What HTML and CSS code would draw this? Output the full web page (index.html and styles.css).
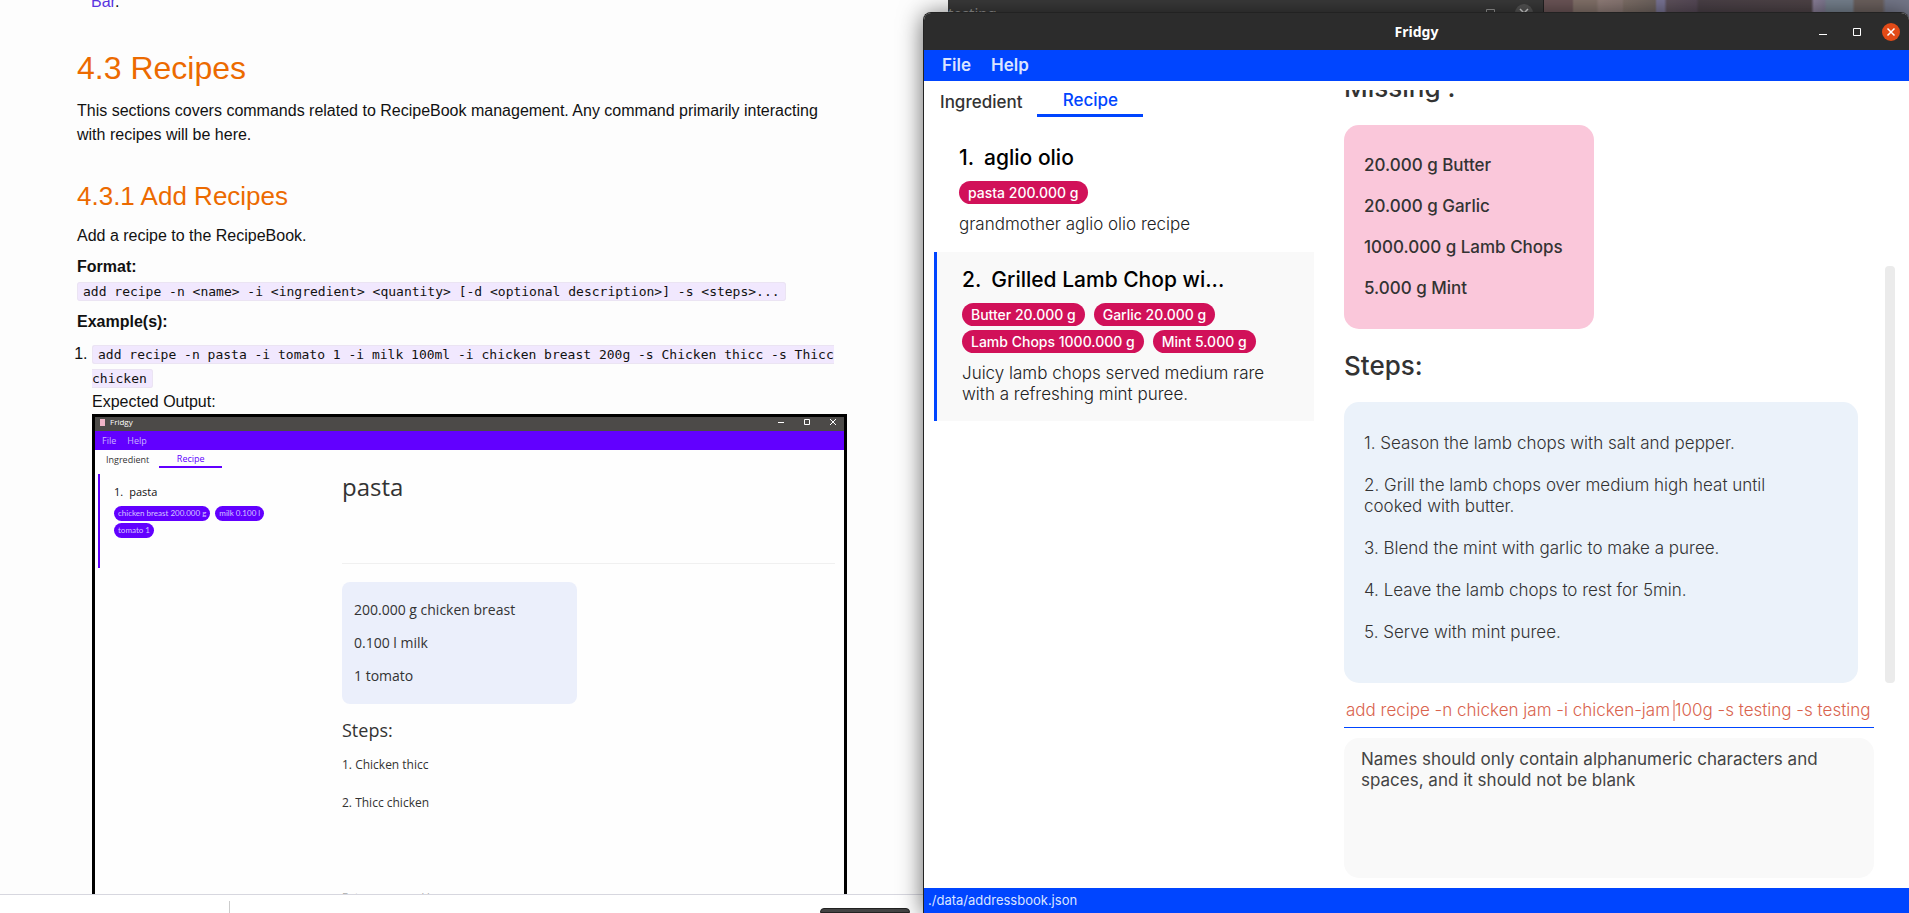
FILE: index.html
```html
<!DOCTYPE html>
<html lang="en">
<head>
<meta charset="utf-8">
<title>Fridgy</title>
<link rel="stylesheet" href="styles.css">
</head>
<body>
<div class="desktop">
  <div class="wallpaper"></div>

  <section class="browser" aria-label="User guide">
    <article class="guide">
      <p class="guide-prev"><a href="#bar">Bar</a>.</p>
      <h2>4.3 Recipes</h2>
      <p>This sections covers commands related to RecipeBook management. Any command primarily interacting with recipes will be here.</p>
      <h3>4.3.1 Add Recipes</h3>
      <p>Add a recipe to the RecipeBook.</p>
      <p><strong>Format:</strong><br><code>add recipe -n &lt;name&gt; -i &lt;ingredient&gt; &lt;quantity&gt; [-d &lt;optional description&gt;] -s &lt;steps&gt;...</code></p>
      <p><strong>Example(s):</strong></p>
      <ol>
        <li><code>add recipe -n pasta -i tomato 1 -i milk 100ml -i chicken breast 200g -s Chicken thicc -s Thicc chicken</code><br>Expected Output:
          <figure class="shot">
            <div class="shot-title">
              <span class="shot-icon"></span><span>Fridgy</span>
              <svg class="shot-controls" viewBox="0 0 60 10" width="60" height="10" fill="none" stroke="#fff"><path d="M1 5.5h6M27.500 2.500h5v5h-5zM53 2l6 6M59 2l-6 6"/></svg>
            </div>
            <div class="shot-menu"><span>File</span><span>Help</span></div>
            <div class="shot-main">
              <div class="shot-left">
                <div class="shot-tabs"><span>Ingredient</span><span class="on">Recipe</span></div>
                <div class="shot-card">
                  <div class="shot-name"><span>1.</span><span>pasta</span></div>
                  <div class="shot-chips"><span>chicken breast 200.000 g</span><span>milk 0.100 l</span><span>tomato 1</span></div>
                </div>
              </div>
              <div class="shot-right">
                <div class="shot-heading">pasta</div>
                <div class="shot-box"><span>200.000 g chicken breast</span><span>0.100 l milk</span><span>1 tomato</span></div>
                <div class="shot-steps">Steps:</div>
                <div class="shot-step">1. Chicken thicc</div>
                <div class="shot-step">2. Thicc chicken</div>
                <div class="shot-input">Enter command here...</div>
              </div>
            </div>
          </figure>
        </li>
      </ol>
    </article>
    <div class="downloads"><span class="tick"></span><span class="showall"></span></div>
  </section>

  <section class="terminal" aria-label="testing">
    <span class="terminal-title">testing</span>
    <svg class="terminal-controls" viewBox="0 0 50 20" width="50" height="20" fill="none"><circle cx="40" cy="10" r="9" fill="#555"/><path d="M2.500 6.500h8v8h-8z" stroke="#999"/><path d="M36 6l8 8M44 6l-8 8" stroke="#ddd" stroke-width="1.500"/></svg>
  </section>

  <main class="window">
    <header class="titlebar">
      <span></span>
      <h1>Fridgy</h1>
      <div class="controls">
        <button aria-label="Minimize"><svg viewBox="0 0 18 18" width="18" height="18"><path d="M5 11.500h8" stroke="#fff"/></svg></button>
        <button aria-label="Maximize"><svg viewBox="0 0 18 18" width="18" height="18"><path d="M5.500 5.500h7v7h-7z" stroke="#fff" fill="none"/></svg></button>
        <button aria-label="Close"><svg viewBox="0 0 18 18" width="18" height="18"><circle cx="9" cy="9" r="9" fill="#e24a17"/><path d="M5.500 5.500l7 7M12.500 5.500l-7 7" stroke="#fff" stroke-width="1.500"/></svg></button>
      </div>
    </header>
    <nav class="menubar"><button>File</button><button>Help</button></nav>
    <div class="content">
      <section class="recipes">
        <div class="tabs" role="tablist">
          <button role="tab" aria-selected="false">Ingredient</button>
          <button role="tab" aria-selected="true">Recipe</button>
        </div>
        <article class="recipe">
          <h2><span>1.</span><span class="name">aglio olio</span></h2>
          <ul class="chips"><li>pasta 200.000 g</li></ul>
          <p>grandmother aglio olio recipe</p>
        </article>
        <article class="recipe selected">
          <h2><span>2.</span><span class="name">Grilled Lamb Chop wi...</span></h2>
          <ul class="chips"><li>Butter 20.000 g</li><li>Garlic 20.000 g</li><li>Lamb Chops 1000.000 g</li><li>Mint 5.000 g</li></ul>
          <p>Juicy lamb chops served medium rare with a refreshing mint puree.</p>
        </article>
      </section>
      <section class="detail">
        <div class="scroller">
          <div class="scroll-body">
            <h2>Missing :</h2>
            <ul class="missing"><li>20.000 g Butter</li><li>20.000 g Garlic</li><li>1000.000 g Lamb Chops</li><li>5.000 g Mint</li></ul>
            <h2>Steps:</h2>
            <div class="steps">
              <p>1. Season the lamb chops with salt and pepper.</p>
              <p>2. Grill the lamb chops over medium high heat until cooked with butter.</p>
              <p>3. Blend the mint with garlic to make a puree.</p>
              <p>4. Leave the lamb chops to rest for 5min.</p>
              <p>5. Serve with mint puree.</p>
            </div>
          </div>
          <div class="thumb"></div>
        </div>
        <div class="command">
          <input type="text" aria-label="Command" value="add recipe -n chicken jam -i chicken-jam 100g -s testing -s testing">
          <span class="caret"></span>
        </div>
        <div class="result">Names should only contain alphanumeric characters and spaces, and it should not be blank</div>
      </section>
    </div>
    <footer class="status">./data/addressbook.json</footer>
  </main>
</div>
</body>
</html>
```

FILE: styles.css
```css
* { box-sizing: border-box; }

body { margin: 0; font-family: "Liberation Sans", Arial, sans-serif; font-size: 16px; }
h1, h2, h3, p, ul, ol, figure { margin: 0; padding: 0; font-weight: 400; }
ul { list-style: none; }
button { border: 0; padding: 0; background: none; font: inherit; color: inherit; }

.desktop { position: relative; height: 100vh; overflow: hidden; background: #fdfdfd; }

.wallpaper {
  position: absolute; top: 0; right: 0; width: 366px; height: 20px;
  background: linear-gradient(90deg, #6d5658 0, #6d5658 29px, #84736b 31px, #84736b 53px, #927f7a 56px, #8a7874 79px, #7f7068 81px, #6f6460 112px, #7a7596 114px, #7a7596 121px, #5f525c 124px, #574a58 153px, #4b4148 156px, #4f4448 268px, #8a7f98 271px, #7f7890 281px, #77828f 284px, #77828f 309px, #6d625f 312px, #6d625f 339px, #75788a 343px);
}

/* Browser window with the user guide */
.browser {
  position: absolute; top: 0; bottom: 0; left: 0; width: 948px;
  display: flex; flex-direction: column; background: #fdfdfd;
}
.guide { flex: 1; min-height: 0; overflow: hidden; padding-left: 77px; color: #111; line-height: 24px; }
.guide > * { max-width: 770px; }
.guide p { margin-bottom: 7px; }
.guide .guide-prev { margin: -10px 0 0; padding-left: 14px; }
.guide a { color: #5a35e0; text-decoration: none; }
.guide h2 { margin: 34px 0 11px; font-size: 32px; line-height: 40px; color: #ec6a00; }
.guide h3 { margin: 33px 0 12px; font-size: 26px; line-height: 32px; color: #ec6a00; }
.guide h2 + p { margin-bottom: 0; }
.guide ol { padding: 1px 0 0 15px; }
code {
  padding: 1px 5px; border: 1px solid #ebe4f3; border-radius: 3px; background: #f1e8fe;
  font: 13px "DejaVu Sans Mono", monospace;
}

/* Example output figure */
.shot {
  display: flex; flex-direction: column; height: 540px;
  border: 3px solid #000; background: #fefefe; color: #333;
  font: 10px "Open Sans", "Noto Sans", sans-serif;
}
.shot-title { display: flex; align-items: center; gap: 5px; height: 14px; padding: 0 7px 4px 5px; background: #4c4a48; color: #fff; font-size: 8px; line-height: 10px; }
.shot-icon { width: 5px; height: 7px; background: #f0b4c8; }
.shot-controls { margin-left: auto; }
.shot-menu { display: flex; gap: 11px; height: 19px; padding-left: 7px; background: #6200ff; color: #c9b2ff; font-size: 9px; line-height: 19px; }
.shot-main { flex: 1; display: grid; grid-template-columns: 247px 1fr; }
.shot-tabs { display: flex; gap: 10px; height: 18px; padding-left: 11px; font-size: 9px; line-height: 20px; }
.shot-tabs .on { width: 63px; border-bottom: 2px solid #6200ff; color: #6200ff; text-align: center; line-height: 18px; }
.shot-card { height: 94px; margin: 6px 0 0 3px; padding: 10px 0 0 14px; border-left: 2px solid #6200ff; }
.shot-name { display: flex; gap: 6px; color: #111; font-size: 11px; line-height: 16px; }
.shot-chips { display: flex; flex-wrap: wrap; gap: 2px 5px; max-width: 160px; margin-top: 6px; }
.shot-chips span { padding: 0 4px; border-radius: 8px; background: #6200ff; color: #d4c4ff; font: 8px/15px Lato, sans-serif; }
.shot-right { padding-right: 9px; }
.shot-heading { height: 114px; padding-top: 20px; border-bottom: 1px solid #f0f0f0; font-size: 24px; line-height: 34px; }
.shot-box { display: grid; gap: 13px; width: 235px; margin: 18px 0 15px; padding: 18px 12px; border-radius: 8px; background: #ebeffb; font-size: 14px; line-height: 20px; }
.shot-steps { margin-bottom: 14px; font-size: 18px; line-height: 22px; }
.shot-step { margin-bottom: 18px; font-size: 12px; line-height: 20px; }
.shot-input { padding-top: 58px; color: #aaa; font-size: 11px; line-height: 16px; }

.downloads { display: flex; justify-content: space-between; height: 19px; padding: 6px 38px 0 229px; border-top: 1px solid #d7d7df; background: #fff; }
.tick { width: 1px; background: #ccc; }
.showall { width: 90px; margin-top: 7px; border: 1px solid #222; border-radius: 4px 4px 0 0; background: #444; }

/* Terminal behind the app */
.terminal {
  position: absolute; top: 0; left: 948px; right: 365px; height: 20px;
  display: flex; justify-content: space-between; padding-right: 9px; overflow: hidden;
  border-right: 1px solid #222; background: #3a3a3a; color: #999; font: 15px/26px "Noto Sans", sans-serif;
}
.terminal-controls { margin-top: 3px; }

/* Fridgy window */
.window {
  position: absolute; top: 12px; bottom: 0; left: 48.35%; right: 0;
  display: flex; flex-direction: column; overflow: hidden;
  border: 1px solid #222; border-width: 1px 0 0 1px; border-radius: 8px 8px 0 0;
  background: #fff; color: #333; box-shadow: 0 2px 24px rgba(0, 0, 0, .6);
  font: 17px/21px Inter, "Open Sans", sans-serif;
}
.titlebar { display: grid; grid-template-columns: 1fr auto 1fr; align-items: center; height: 37px; background: #2c2c2c; color: #fff; }
.titlebar h1 { font: 700 14px/20px "Noto Sans", sans-serif; }
.controls { display: flex; justify-content: flex-end; gap: 16px; padding-right: 9px; }
.controls button, .controls svg { display: block; }
.menubar { display: flex; gap: 20px; height: 31px; padding-left: 18px; background: #0045ff; color: #dbe4ff; font-weight: 600; }
.content { flex: 1; min-height: 0; display: grid; grid-template-columns: 400fr 585fr; }

.recipes { padding: 0 10px; }
.tabs { display: flex; gap: 15px; height: 36px; padding-left: 6px; font-weight: 500; }
.tabs [aria-selected="false"] { padding-top: 7px; }
.tabs [aria-selected="true"] { width: 106px; padding-top: 6px; border-bottom: 3px solid #0045ff; color: #0045ff; }
.recipe { padding: 15px 25px 16px; color: #222; }
.recipe h2 { display: flex; gap: 10px; color: #000; font-size: 21px; font-weight: 500; line-height: 26px; }
.recipe p, .steps p { font-weight: 300; }
.recipe .name { overflow: hidden; white-space: nowrap; text-overflow: ellipsis; }
.tabs + .recipe { margin-top: 13px; }
.chips { display: flex; flex-wrap: wrap; gap: 4px 9px; margin: 10px 0; }
.chips li { padding: 0 9px; border-radius: 12px; background: #d11159; color: #fff; font-size: 14px; font-weight: 500; line-height: 23px; }
.selected { margin-top: 1px; border-left: 3px solid #0045ff; background: #f9f9f9; }

.detail { display: flex; flex-direction: column; min-height: 0; padding: 9px 14px 10px 20px; }
.scroller { flex: 1; min-height: 0; display: flex; gap: 27px; overflow: hidden; }
.scroll-body { flex: 1; display: flex; flex-direction: column; justify-content: flex-end; overflow: hidden; }
.scroll-body > * { flex: none; }
.scroll-body h2 { font-size: 26px; font-weight: 500; line-height: 32px; }
.missing { display: grid; gap: 20px; width: 250px; margin: 21px 0; padding: 30px 20px; border-radius: 15px; background: #fac7da; font-weight: 500; }
.steps { display: grid; gap: 21px; margin-top: 20px; padding: 31px 40px 40px 20px; border-radius: 15px; background: #ebf2fa; }
.thumb { width: 10px; height: 417px; align-self: flex-end; border-radius: 4px; background: #ebebeb; }
.command { position: relative; margin: 10px 21px 10px 0; border-bottom: 1px solid #0045ff; }
.command input { display: block; width: 100%; height: 34px; padding: 0 2px; border: 0; outline: 0; background: none; color: #d9634e; font: inherit; font-weight: 300; }
.caret { position: absolute; top: 7px; left: 62%; width: 2px; height: 21px; background: #eeb0a8; }
.result { height: 140px; margin-right: 21px; padding: 11px 17px; border-radius: 15px; background: #f9f9f9; color: #444; }
.status { height: 25px; padding-left: 4px; background: #0045ff; color: #dbe4ff; font-size: 13px; line-height: 25px; }
```
